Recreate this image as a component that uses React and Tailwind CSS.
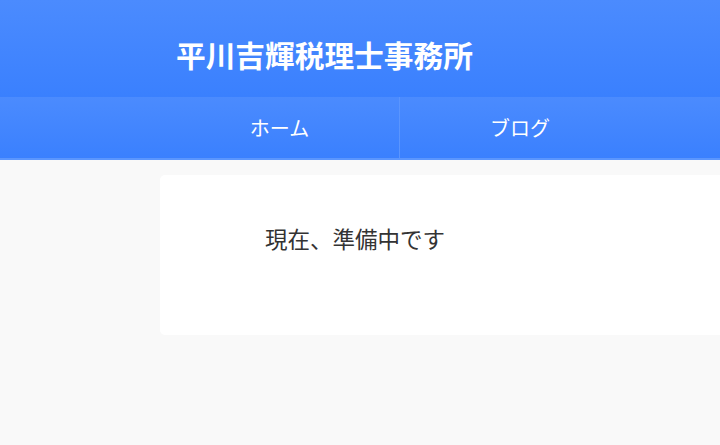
export default function App() {
  return (
    <div
      className="min-h-[445px] w-[720px] overflow-hidden bg-[#f9f9f9]"
      style={{ fontFamily: '"Noto Sans CJK JP", "Noto Sans", sans-serif' }}
    >
      <header className="h-[97px] bg-gradient-to-b from-[#4b8bfe] to-[#3a80fe]">
        <div className="ml-[160px] flex h-full w-[800px] items-center pt-[13px]">
          <h1 className="pl-[16px] text-[29.7px] font-bold leading-none text-white">
            平川吉輝税理士事務所
          </h1>
        </div>
      </header>

      <nav className="h-[63px] border-b-2 border-[#5b96fe] bg-gradient-to-b from-[#4b8bfe] to-[#3a80fe]">
        <ul className="ml-[160px] flex h-full w-[800px]">
          <li className="flex h-full w-[240px] items-center justify-center border-r border-[#5a95fe] text-[20px] text-white">
            ホーム
          </li>
          <li className="flex h-full w-[240px] items-center justify-center text-[20px] text-white">
            ブログ
          </li>
        </ul>
      </nav>

      <main className="ml-[160px] w-[800px] pt-[15px]">
        <div className="flex h-[160px] rounded-[5px] bg-white pl-[105px] pt-[52px]">
          <p className="text-[22.5px] leading-none text-[#333]">現在、準備中です</p>
        </div>
      </main>
    </div>
  );
}
